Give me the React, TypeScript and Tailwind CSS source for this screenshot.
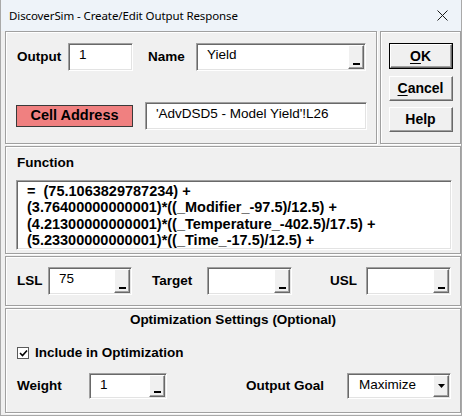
function Sunken({ className, children }: { className?: string; children?: React.ReactNode }) {
    return (
        <div
            className={`flex bg-white border border-t-[#a0a0a0] border-l-[#a0a0a0] border-b-white border-r-white shadow-[inset_1px_1px_0_#696969,inset_-1px_-1px_0_#e3e3e3] ${className}`}
        >
            {children}
        </div>
    )
}

function DashButton() {
    return (
        <div className="w-[16px] my-[1px] mr-[1px] bg-[#f0f0f0] border border-t-white border-l-white border-b-[#696969] border-r-[#696969] shadow-[inset_-1px_-1px_0_#a0a0a0] flex items-end justify-center pb-[3px]">
            <div className="w-[7px] h-[2px] bg-black" />
        </div>
    )
}

function Field({ className, value, dash }: { className?: string; value?: string; dash?: boolean }) {
    return (
        <Sunken className={className}>
            <div className="flex-1 pl-[10px] pt-[3px] text-[13.5px] leading-[16px] text-black">{value}</div>
            {dash && <DashButton />}
        </Sunken>
    )
}

function Panel({ className, children }: { className?: string; children?: React.ReactNode }) {
    return (
        <div className={`border border-[#a0a0a0] shadow-[inset_1px_1px_0_#fff,1px_1px_0_#fff] ${className}`}>
            {children}
        </div>
    )
}

function Btn({ u, rest }: { u: string; rest: string }) {
    return (
        <div className="w-full h-full bg-[#f0f0f0] border border-t-white border-l-white border-b-[#696969] border-r-[#696969] shadow-[inset_-1px_-1px_0_#a0a0a0] flex items-center justify-center text-[14px] font-bold">
            {u ? <span className="underline underline-offset-2">{u}</span> : null}
            {rest}
        </div>
    )
}

const formula = [
    '=  (75.1063829787234) +',
    '(3.76400000000001)*((_Modifier_-97.5)/12.5) +',
    '(4.21300000000001)*((_Temperature_-402.5)/17.5) +',
    '(5.23300000000001)*((_Time_-17.5)/12.5) +',
]

export default function App() {
    return (
        <div className="w-[462px] h-[416px] overflow-hidden bg-[#f0f0f0] border-x border-b border-[#a9a9a9] font-['Liberation_Sans',Arial,sans-serif] text-black">
            <div className="h-[31px] bg-[#eef3f9] flex items-center justify-between pl-[8px] pr-[12px]">
                <span className="font-['Noto_Sans',sans-serif] text-[11.5px] tracking-[-0.1px]">
                    DiscoverSim - Create/Edit Output Response
                </span>
                <svg width="11" height="11" viewBox="0 0 11 11" className="mr-[1px]">
                    <path d="M0.5 0.5 L10.5 10.5 M10.5 0.5 L0.5 10.5" stroke="#1a1a1a" strokeWidth="1" />
                </svg>
            </div>

            <div className="pl-[4px] pt-0">
                <div className="flex gap-[3px]">
                    <Panel className="w-[372px] h-[113px] pl-[11px] pt-[11px]">
                        <div className="flex items-center h-[28px]">
                            <span className="w-[51px] text-[13.5px] font-bold">Output</span>
                            <Field className="w-[65px] h-[28px]" value="1" />
                            <span className="ml-[15px] w-[48px] text-[13.5px] font-bold">Name</span>
                            <Field className="w-[170px] h-[28px]" value="Yield" dash />
                        </div>
                        <div className="flex items-center h-[28px] mt-[31px]">
                            <div className="-ml-[1px] w-[117px] h-[22px] bg-[#f08080] border border-[#3a3a3a] flex items-center justify-center text-[14.5px] font-bold">
                                Cell Address
                            </div>
                            <Field className="ml-[12px] w-[222px] h-[28px]" value="'AdvDSD5 - Model Yield'!L26" />
                        </div>
                    </Panel>
                    <Panel className="w-[81px] h-[113px] pt-[11px] flex flex-col items-center">
                        <div className="w-[64px] h-[26px] border border-black">
                            <Btn u="O" rest="K" />
                        </div>
                        <div className="w-[64px] h-[25px] mt-[7px]">
                            <Btn u="C" rest="ancel" />
                        </div>
                        <div className="w-[64px] h-[25px] mt-[6px]">
                            <Btn u="" rest="Help" />
                        </div>
                    </Panel>
                </div>

                <Panel className="mt-[2px] w-[456px] h-[108px] pl-[10px] pt-[8px]">
                    <div className="text-[13.5px] font-bold leading-[16px] pl-[1px]">Function</div>
                    <Sunken className="mt-[9px] w-[436px] h-[70px] overflow-hidden">
                        <div className="pl-[10px] pt-[2px] text-[14.5px] font-bold leading-[16.3px] whitespace-pre">
                            {formula.map((l) => (
                                <div key={l}>{l}</div>
                            ))}
                        </div>
                    </Sunken>
                </Panel>

                <Panel className="mt-[2px] w-[456px] h-[50px] pl-[11px] pt-[10px]">
                    <div className="flex items-center h-[28px]">
                        <span className="w-[31px] text-[13.5px] font-bold">LSL</span>
                        <Field className="w-[84px] h-[28px]" value="75" dash />
                        <span className="ml-[20px] w-[55px] text-[13.5px] font-bold">Target</span>
                        <Field className="w-[85px] h-[28px]" dash />
                        <span className="ml-[38px] w-[36px] text-[13.5px] font-bold">USL</span>
                        <Field className="w-[85px] h-[28px]" dash />
                    </div>
                </Panel>

                <Panel className="mt-[2px] w-[456px] h-[105px] pt-[3px]">
                    <div className="text-center text-[13.5px] font-bold leading-[16px]">
                        Optimization Settings (Optional)
                    </div>
                    <div className="flex items-center h-[16px] mt-[17px] pl-[11px]">
                        <div className="w-[12px] h-[12px] bg-white border border-[#5a5a5a] flex items-center justify-center">
                            <svg width="9" height="9" viewBox="0 0 9 9">
                                <path d="M1 4 L3.5 6.5 L8 1.5" stroke="#000" strokeWidth="1.6" fill="none" />
                            </svg>
                        </div>
                        <span className="ml-[6px] text-[13.5px] font-bold">Include in Optimization</span>
                    </div>
                    <div className="flex items-center h-[26px] mt-[12px] pl-[11px]">
                        <span className="w-[72px] text-[13.5px] font-bold">Weight</span>
                        <Field className="w-[78px] h-[26px]" value="1" dash />
                        <span className="ml-[79px] w-[101px] text-[13.5px] font-bold">Output Goal</span>
                        <Sunken className="w-[104px] h-[26px]">
                            <div className="flex-1 pl-[11px] pt-[3px] text-[13.5px] leading-[16px]">Maximize</div>
                            <div className="w-[16px] my-[1px] mr-[1px] bg-[#f0f0f0] border border-t-white border-l-white border-b-[#696969] border-r-[#696969] shadow-[inset_-1px_-1px_0_#a0a0a0] flex items-center justify-center">
                                <svg width="7" height="4" viewBox="0 0 7 4">
                                    <path d="M0 0 H7 L3.5 4 Z" fill="#000" />
                                </svg>
                            </div>
                        </Sunken>
                    </div>
                </Panel>
            </div>
        </div>
    )
}
